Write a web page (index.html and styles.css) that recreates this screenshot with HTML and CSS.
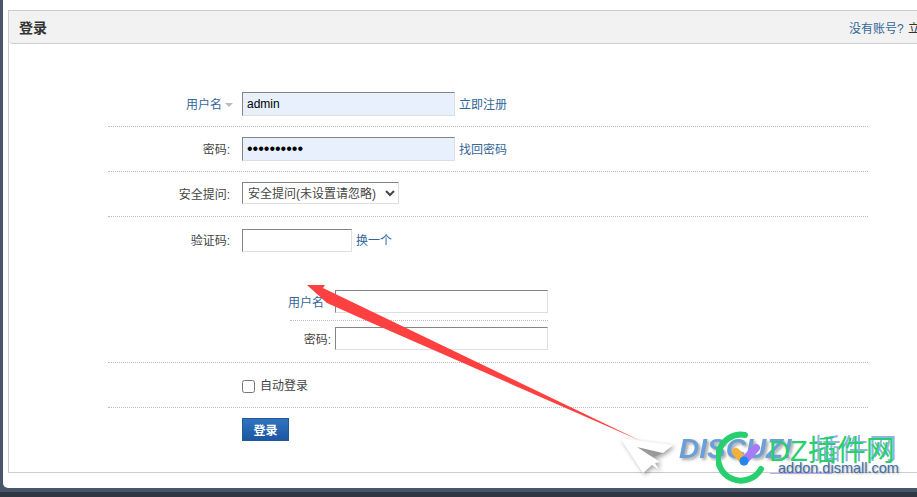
FILE: index.html
```html
<!DOCTYPE html>
<html lang="zh-CN">
<head>
    <meta charset="UTF-8">
    <meta name="viewport" content="width=device-width, initial-scale=1.0">
    <title>登录</title>
    <link rel="stylesheet" href="styles.css">
</head>
<body>
    <div class="window">
        <div class="panel">
            <div class="panel-head">
                <h3 class="panel-title">登录</h3>
                <div class="panel-links"><a href="#">没有账号?</a> <a href="#" class="dark">立</a></div>
            </div>
            <form class="login-form">
                <div class="row">
                    <div class="label"><a href="#">用户名</a><span class="caret"></span></div>
                    <input class="txt filled" type="text" value="admin">
                    <a href="#" class="side">立即注册</a>
                </div>
                <div class="row">
                    <div class="label">密码:</div>
                    <input class="txt filled pass" type="password" value="adminadmin">
                    <a href="#" class="side">找回密码</a>
                </div>
                <div class="row">
                    <div class="label">安全提问:</div>
                    <select class="sel">
                        <option>安全提问(未设置请忽略)</option>
                    </select>
                </div>
                <div class="row row-captcha">
                    <div class="label">验证码:</div>
                    <input class="txt short" type="text">
                    <a href="#" class="side">换一个</a>
                </div>
                <div class="row row-nested">
                    <div class="nested">
                        <div class="nested-row first">
                            <div class="label small"><a href="#">用户名</a><span class="caret"></span></div>
                            <input class="txt" type="text">
                        </div>
                        <div class="nested-row">
                            <div class="label small">密码:</div>
                            <input class="txt" type="text">
                        </div>
                    </div>
                </div>
                <div class="row row-check">
                    <label class="check"><input type="checkbox"> 自动登录</label>
                </div>
                <div class="row-btn">
                    <button type="button" class="btn">登录</button>
                </div>
            </form>
        </div>
    </div>

    <!-- screenshot markup and watermark sit over the page -->
    <svg class="arrow" width="917" height="497" viewBox="0 0 917 497">
        <path d="M307 285 L325 285 L323 288 L641 441 L365 320 L327 303 Z" fill="#ff4040"/>
    </svg>
    <div class="mark">
        <span class="mark-dz">DISCUZ!</span>
        <span class="mark-cn">插件网</span>
        <span class="mark-url">addon.dismall.com</span>
        <span class="mark-line"></span>
        <svg class="plane" width="60" height="44" viewBox="0 0 60 44">
            <path d="M17 13 L43 19 L34 23 L24 20 Z" fill="#999"/>
            <path d="M0 4 L53 11 L43 19 L17 13 L40 28 L35 29 L39 36 L32 31 L23 39 Z" fill="#fff"/>
        </svg>
        <svg class="mark-logo" width="50" height="54" viewBox="0 0 50 54">
            <path d="M29 4 A23 23 0 1 0 45 38" fill="none" stroke="#27cf6f" stroke-width="6" stroke-linecap="round"/>
            <path d="M20 21 L28 30" stroke="#f3b13a" stroke-width="8" stroke-linecap="round"/>
            <path d="M28 30 L40 17" stroke="#a67cf5" stroke-width="8" stroke-linecap="round"/>
            <circle cx="28" cy="30" r="4.5" fill="#1f86ee"/>
        </svg>
        <span class="mark-green">DZ插件网</span>
    </div>
</body>
</html>
```
FILE: styles.css
```css
* {
    box-sizing: border-box;
}

html, body {
    margin: 0;
    height: 497px;
    overflow: hidden;
}

body {
    position: relative;
    background: linear-gradient(#48566a 0, #48566a 492px, #2f3742 492px);
    font-family: "Liberation Sans", "Noto Sans CJK SC", sans-serif;
    font-size: 12px;
    color: #444;
}

a {
    color: #369;
    text-decoration: none;
}

.window {
    height: 488px;
    margin-left: 3px;
    padding: 10px 0 0 5px;
    background: #fff;
    border-bottom-left-radius: 5px;
    overflow: hidden;
}

.panel {
    width: 1000px;
    height: 463px;
    border: 1px solid #ccc;
}

.panel-head {
    display: flex;
    align-items: center;
    height: 33px;
    padding: 0 10px;
    background: #f2f2f2;
    border-bottom: 1px solid #cdcdcd;
    border-bottom-left-radius: 4px;
}

.panel-title {
    margin: 0;
    font-size: 14px;
    font-weight: bold;
    color: #333;
}

.panel-links {
    margin-left: 802px;
    white-space: nowrap;
}

.panel-links .dark {
    margin-left: 1px;
    color: #333;
}

.login-form {
    width: 760px;
    margin-left: 99px;
    padding-top: 48px;
}

.row {
    display: flex;
    align-items: flex-start;
    padding-bottom: 10px;
    margin-bottom: 10px;
    border-bottom: 1px dotted #bbb;
}

.label {
    display: flex;
    justify-content: flex-end;
    flex: none;
    width: 122px;
    height: 24px;
    margin-right: 12px;
    line-height: 26px;
    white-space: nowrap;
}

.label.small {
    width: 45px;
    height: 23px;
    margin-right: 0;
    padding-right: 4px;
    line-height: 27px;
}

.caret {
    flex: none;
    align-self: center;
    margin-top: 2px;
    margin-left: 3px;
    margin-right: -3px;
    border: 4px solid transparent;
    border-top: 4px solid #bbb;
    border-bottom: 0;
}

.label.small .caret {
    margin-right: -4px;
}

.txt {
    width: 213px;
    height: 24px;
    padding: 2px 4px;
    background: #fff;
    border: 1px solid #dedede;
    border-top-color: #848484;
    border-left-color: #848484;
    font: 12px "Liberation Sans", "Noto Sans CJK SC", sans-serif;
    color: #000;
}

.txt.filled {
    background: #e8f0fe;
}

.txt.pass {
    font-size: 16px;
}

.txt.short {
    width: 110px;
    height: 23px;
}

.side {
    height: 24px;
    margin-left: 4px;
    line-height: 26px;
}

.sel {
    width: 157px;
    height: 22px;
    margin-bottom: 2px;
    padding: 1px 0 0 1px;
    background: #fff;
    border: 1px solid #dedede;
    border-top-color: #848484;
    border-left-color: #848484;
    font: 12px "Liberation Sans", "Noto Sans CJK SC", sans-serif;
    color: #444;
}

.row-captcha {
    margin-top: 12px;
    height: 24px;
    margin-bottom: 0;
    padding-bottom: 0;
    border-bottom: 0;
}

.row-captcha .label,
.row-captcha .side {
    line-height: 25px;
}

.row-nested {
    padding: 37px 0 12px 182px;
    margin-bottom: 16px;
}

.nested {
    width: 258px;
}

.nested-row {
    display: flex;
}

.nested-row .txt {
    height: 23px;
}

.nested-row.first {
    padding-bottom: 7px;
    margin-bottom: 6px;
    border-bottom: 1px dotted #bbb;
}

.check {
    display: flex;
    align-items: center;
    margin-left: 134px;
    line-height: 14px;
    gap: 5px;
}

.check input {
    width: 13px;
    height: 13px;
    margin: 0;
}

.row-check {
    padding-bottom: 14px;
}

.row-btn {
    padding-left: 134px;
}

.btn {
    display: block;
    width: 47px;
    height: 23px;
    padding: 0;
    background: linear-gradient(#2f74be, #1d56a3);
    border: 1px solid #235994;
    color: #fff;
    font: bold 12px "Liberation Sans", "Noto Sans CJK SC", sans-serif;
}

.arrow {
    position: absolute;
    left: 0;
    top: 0;
}

.mark {
    position: absolute;
    left: 620px;
    top: 428px;
    width: 297px;
    height: 60px;
}

.plane {
    position: absolute;
    left: 0;
    top: 6px;
    overflow: visible;
    filter: drop-shadow(2px 2px 2px rgba(0, 0, 0, .35));
}

.mark-dz {
    position: absolute;
    left: 59px;
    top: 5px;
    font: italic bold 28px "Liberation Sans", sans-serif;
    color: #6b9fd8;
    text-shadow: 2px 2px 3px rgba(0, 0, 0, .35);
    filter: blur(.4px);
}

.mark-cn {
    position: absolute;
    left: 193px;
    top: 5px;
    font-size: 28px;
    line-height: 34px;
    color: #8fb4de;
    filter: blur(.4px);
}

.mark-url {
    position: absolute;
    left: 158px;
    top: 30px;
    font-size: 14.5px;
    line-height: 20px;
    color: #3f6ea8;
    text-shadow: 1px 1px 2px rgba(0, 0, 0, .35);
}

.mark-line {
    position: absolute;
    left: 150px;
    top: 45px;
    width: 62px;
    height: 1px;
    background: #b9a8f0;
}

.mark-logo {
    position: absolute;
    left: 96px;
    top: 3px;
}

.mark-green {
    position: absolute;
    left: 149px;
    top: 1px;
    font-size: 29px;
    line-height: 44px;
    color: #27cf6f;
    white-space: nowrap;
}
```
